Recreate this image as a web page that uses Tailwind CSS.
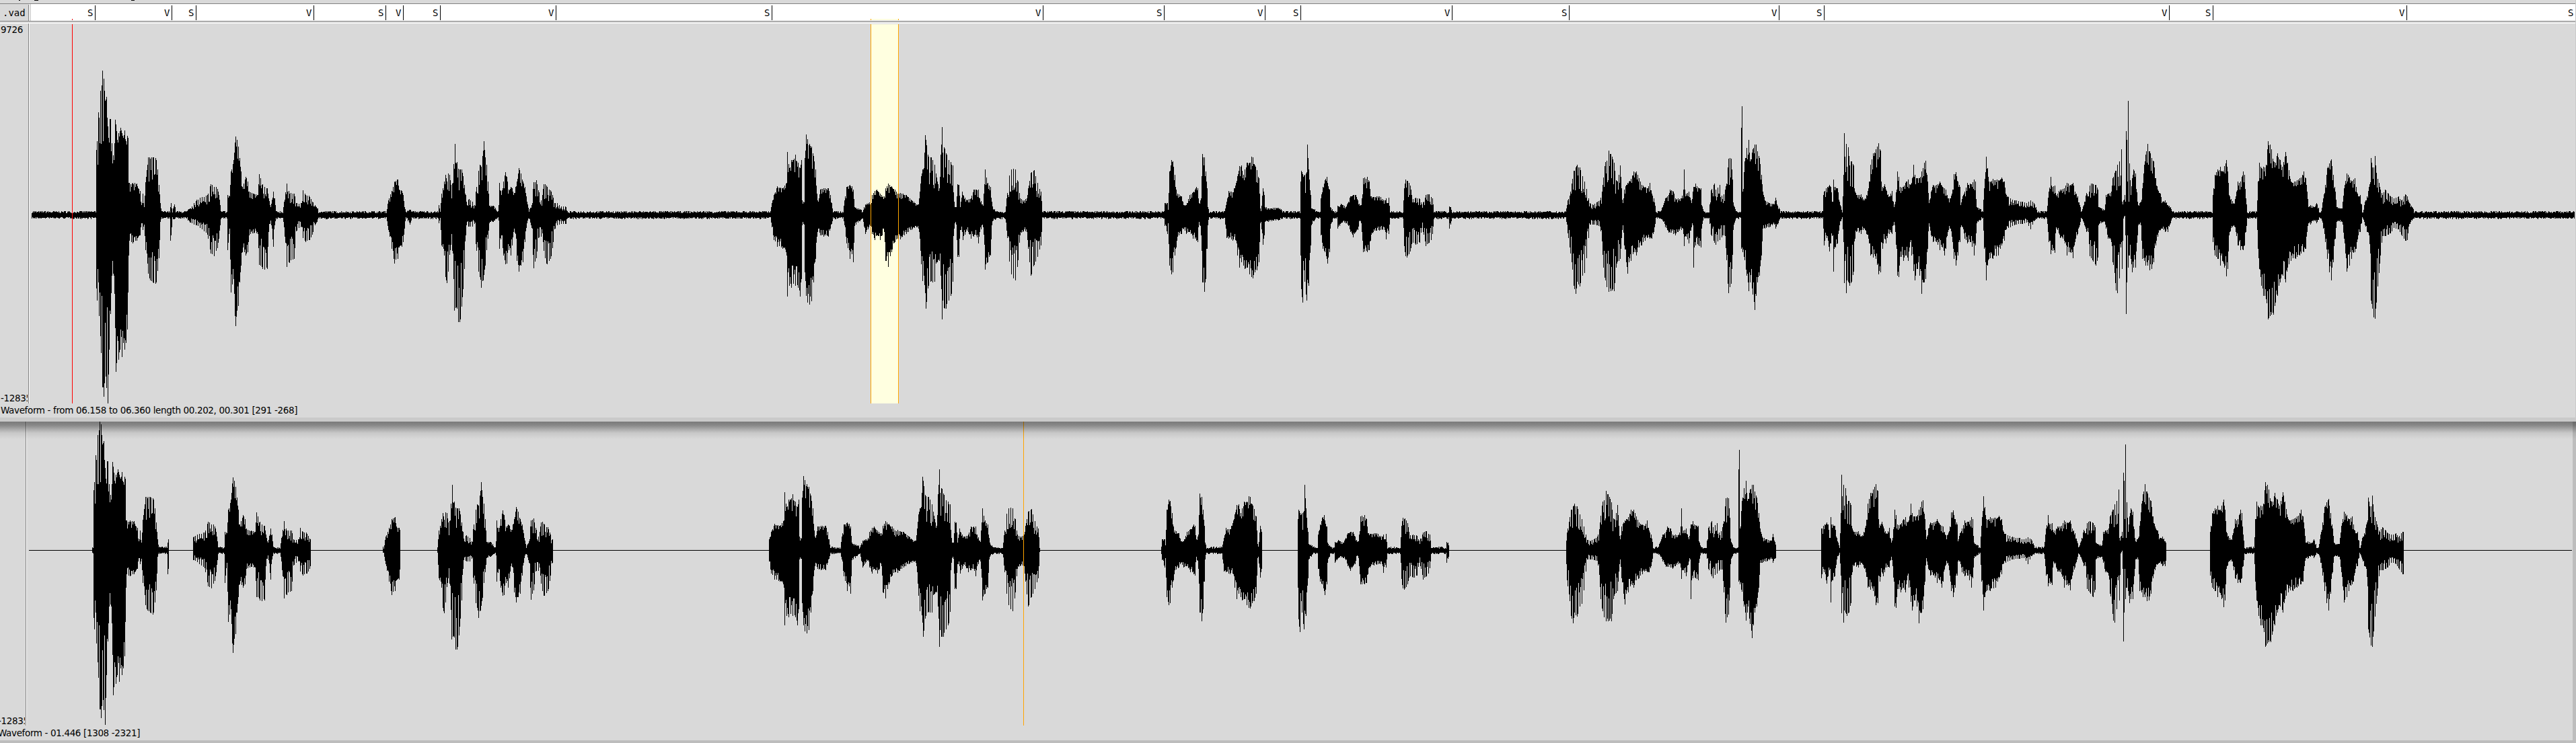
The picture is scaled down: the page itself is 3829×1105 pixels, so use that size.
<!DOCTYPE html>
<html lang="en">
<head>
<meta charset="utf-8">
<title>Waveform</title>
<script src="https://cdn.jsdelivr.net/npm/@tailwindcss/browser@4"></script>
</head>
<body class="w-[3829px] h-[1105px] overflow-hidden bg-[#d9d9d9] text-black font-['DejaVu_Sans',sans-serif] text-[13.5px] tracking-[-0.36px]">
<main class="flex flex-col w-full h-full">
  <section class="flex flex-col h-[627px] border-b-[6px] border-r border-[#cacaca] shrink-0">
    <div class="h-[5px] shrink-0 overflow-hidden">
      <svg class="block" width="300" height="5" shape-rendering="crispEdges"><path d="M28 0h2v1h-2zM51 0h6v1h-6zM195 0h5v1h-5z"/></svg>
    </div>
    <div class="flex h-[27px] shrink-0 border-y border-[#828282] font-['DejaVu_Sans_Mono',monospace] text-[14px] tracking-normal">
      <div class="w-[43px] mt-px border-r border-[#828282] pl-[4px] leading-[24px]">.vad</div>
      <div class="w-px bg-white"></div>
      <div class="w-[2px] bg-[#d9d9d9]"></div>
      <div id="marks" class="relative grow bg-white overflow-hidden"></div>
    </div>
    <div class="h-[2px] shrink-0"></div>
    <div class="h-px bg-white shrink-0"></div>
    <div class="flex h-[565px] shrink-0">
      <div class="flex flex-col justify-between w-[43px] border-r border-[#828282] pl-px pt-[1px] overflow-hidden leading-[16px]">
        <span>9726</span><span class="w-10 overflow-hidden">-12835</span>
      </div>
      <div class="w-px bg-white"></div>
      <svg id="top" class="block" width="3784" height="565" viewBox="44 35 3784 565" shape-rendering="crispEdges">
        <rect x="1294" y="36" width="42" height="564" fill="#ffffe0"/>
        <path class="wave" stroke="#000" fill="none"/>
        <path d="M107.500 36V600" stroke="#f00"/>
        <path d="M1294.500 36V600M1335.500 36V600" stroke="#ffa500"/>
      </svg>
    </div>
    <div class="leading-[21px] pl-px whitespace-pre">Waveform - from 06.158 to 06.360 length 00.202, 00.301 [291 -268]</div>
  </section>
  <section class="relative flex flex-col grow border-r-[5px] border-b-[5px] border-[#bdbdbd]">
    <div class="flex h-[452px] shrink-0">
      <div class="flex flex-col justify-end w-[39px] border-r border-[#828282] overflow-hidden leading-[14px]">
        <span class="-ml-[3px] w-[40px] overflow-hidden">-12835</span>
      </div>
      <div class="w-px bg-white"></div>
      <svg id="bottom" class="block" width="3784" height="452" viewBox="40 627 3784 452" shape-rendering="crispEdges">
        <path d="M43 818.500H3823" stroke="#000"/>
        <path class="wave" stroke="#000" fill="none"/>
        <path d="M1521.500 627V1079" stroke="#ffa500"/>
      </svg>
    </div>
    <div class="-ml-[3px] leading-[22px] whitespace-pre">Waveform - 01.446 [1308 -2321]</div>
    <div class="absolute top-0 left-0 -right-[5px] h-[26px] bg-linear-[to_bottom,rgba(0,0,0,.44)_0%,rgba(0,0,0,.37)_22%,rgba(0,0,0,.22)_43%,rgba(0,0,0,.08)_65%,transparent_100%]"></div>
  </section>
</main>
<script>
// Voice activity marks: label and x position of each boundary
const marks = [['S',141],['V',255],['S',291],['V',466],['S',573],['V',599],['S',654],['V',826],['S',1147],['V',1550],['S',1730],['V',1880],['S',1933],['V',2158],['S',2332],['V',2644],['S',2711],['V',3224],['S',3289],['V',3577],['S',3828]];
document.getElementById('marks').innerHTML = marks.map(([t, x]) =>
  `<div class="absolute top-[2px] h-[22px] w-[12px] border-r border-black leading-[23px]" style="left:${x - 57}px">${t}</div>`).join('')
  + '<div class="absolute top-[22px] h-[2px] w-px bg-red-600 left-[61px]"></div><div class="absolute top-[22px] h-[2px] w-[42px] left-[1248px] bg-[#ffffe0] border-x border-[#ffa500]"></div>';

// Envelope of the signal: x, peak above zero, peak below zero
const env = `47,5,5;142,5,5;142.5,50,50;143,97,109;144,110,127;145,75,80;146,153,100;147,145,150;148,107,115;149,185,180;150,106,205;151,193,120;152,215,256;153,110,256;154,203,270;155,185,250;156,170,160;157,172,240;158,176,257;159,145,137;160,132,281;161,115,237;162,108,200;163,143,142;164,143,147;166,107,90;169,82,90;171,142,168;172,135,233;173,125,220;174,112,180;176,122,215;178,125,200;179,130,170;181,122,211;183,115,190;185,126,200;187,110,190;188,105,148;189,118,170;190,115,115;190.500,48,71;192,48,38;197,48,42;203,47,38;208,36,30;210,15,12;212,32,22;214,12,14;215.500,44,50;218,68,60;220,88,92;223,86,98;227,88,103;232,84,103;234,70,88;236,45,65;238,18,10;240,6,6;252,6,6;253,12,38;254,18,30;256,8,8;259,16,6;261,7,6;275,6,6;283,10,12;292,23,16;300,27,22;308,30,30;313,46,60;318,44,64;323,40,50;325,30,35;328,8,6;337,6,6;338,30,52;341,28,20;343,65,115;347,82,95;349,108,150;350,117,165;352,112,142;354,102,135;356,85,100;358,65,75;360,42,55;365,57,60;368,50,55;370,35,30;377,32,27;383,30,28;385,62,76;389,47,80;393,42,85;397,40,82;399,25,25;402,12,8;406,35,47;408,25,15;410,6,6;420,7,6;422,20,18;426,48,78;430,33,72;437,32,66;440,18,25;444,17,20;448,18,18;450,37,35;454,30,41;460,28,38;464,20,30;468,15,16;474,7,6;500,7,5;560,4,5;573,5,5;574,7,7;577,22,22;582,36,50;586,50,72;591,53,65;593,38,48;597,36,47;599,30,40;601,12,20;603,6,5;609,8,14;612,6,8;640,6,8;651,5,6;652,15,12;654,6,6;656,32,45;660,50,60;662,60,92;664,50,104;666,62,85;668,60,60;670,45,45;673,50,58;674,78,98;675,70,150;676,107,72;677,80,145;679,80,142;681,72,164;683,68,163;686,68,140;688,58,115;690,45,80;692,30,30;693,20,16;697,24,18;702,20,18;706,14,12;707,35,45;711,68,85;713,76,95;715,74,109;718,98,100;719,110,92;721,90,78;723,75,55;725,50,35;727,14,12;733,14,10;740,6,5;741,15,8;742,48,50;745,30,30;748,50,60;751,64,73;753,57,72;756,38,52;759,42,60;761,40,45;763,30,25;766,42,28;768,50,68;771,70,84;774,62,75;777,50,70;780,42,40;783,20,12;786,7,5;790,15,20;793,50,80;797,52,65;800,38,35;804,22,34;806,30,28;808,47,55;812,44,75;818,37,69;821,30,50;824,18,22;828,18,16;834,13,14;841,12,14;843,5,5;1143,5,5;1145,6,6;1147,18,18;1150,30,37;1155,43,47;1163,40,50;1168,47,55;1169,48,60;1170,94,121;1173,70,105;1176,82,108;1179,82,102;1182,90,105;1186,78,108;1189,70,121;1191,82,95;1192,22,15;1195,19,14;1196,85,85;1198,120,120;1200,113,130;1203,106,133;1206,102,128;1209,88,100;1212,68,65;1214,32,32;1216,20,20;1219,38,30;1224,40,32;1231,40,32;1234,30,20;1238,7,7;1253,5,5;1255,22,15;1258,42,42;1263,45,65;1266,43,58;1268,38,70;1270,12,16;1282,7,7;1286,16,28;1294,20,16;1296,30,28;1300,36,37;1303,38,30;1308,32,37;1314,28,25;1316,40,68;1320,47,77;1325,43,55;1330,38,40;1334,32,35;1338,33,36;1347,30,28;1355,22,22;1363,15,18;1365,16,20;1367,35,35;1369,58,73;1371,68,98;1373,70,90;1375,124,120;1376,112,142;1379,90,110;1384,88,103;1389,75,100;1391,62,72;1393,50,70;1396,40,68;1398,90,90;1399,105,110;1400,134,162;1401,95,130;1403,103,143;1406,92,142;1410,82,130;1414,78,118;1416,76,100;1418,20,20;1419,12,12;1421,12,14;1423,46,62;1425,45,62;1427,12,22;1430,35,25;1431,30,37;1437,22,23;1443,25,35;1447,38,32;1451,38,30;1454,38,42;1456,25,25;1461,14,18;1464,68,81;1468,48,70;1472,42,60;1474,20,15;1476,9,8;1494,6,6;1496,25,25;1500,60,70;1503,70,92;1506,72,98;1509,68,100;1513,50,70;1516,25,30;1520,22,25;1526,25,25;1528,40,50;1532,63,93;1537,68,76;1542,48,65;1547,35,45;1549,7,6;1730,6,6;1731,18,16;1735,18,28;1736,8,12;1738,65,75;1741,82,88;1743,80,85;1746,60,60;1748,38,48;1750,32,32;1756,28,28;1759,15,20;1763,15,28;1768,30,25;1773,34,35;1778,42,38;1780,40,40;1782,18,10;1785,25,30;1787,91,100;1790,86,114;1792,65,95;1794,40,50;1795,12,15;1797,6,6;1820,5,5;1823,20,34;1826,36,35;1832,34,38;1837,48,38;1839,58,60;1842,73,78;1845,74,70;1848,60,75;1850,68,80;1853,78,78;1857,78,88;1860,87,92;1862,86,94;1865,74,85;1868,67,82;1871,55,70;1873,10,12;1874,6,10;1877,40,44;1879,30,30;1880,12,10;1885,10,10;1900,11,8;1910,6,5;1932,5,5;1933,50,60;1934,66,115;1936,62,131;1937,58,70;1939,62,100;1942,64,131;1943,107,100;1945,70,110;1946,55,70;1948,30,45;1949,10,15;1955,8,8;1962,8,8;1963,25,30;1966,42,50;1969,52,55;1972,57,65;1973,48,72;1976,38,55;1977,12,20;1982,6,5;1987,5,4;1988,14,20;1991,12,16;1993,17,12;2000,12,12;2003,18,14;2007,28,25;2011,30,33;2015,30,25;2018,22,22;2021,14,8;2023,15,12;2024,25,25;2026,55,55;2032,57,55;2035,50,52;2037,28,38;2041,27,25;2050,28,23;2058,22,22;2060,25,36;2062,18,20;2064,26,28;2066,6,6;2085,5,5;2087,40,48;2089,54,64;2092,52,63;2096,45,55;2098,30,45;2100,25,42;2104,26,45;2110,24,42;2113,16,20;2116,20,30;2119,30,47;2123,32,43;2127,28,38;2129,26,30;2131,7,6;2153,5,5;2154,13,20;2156,12,14;2158,6,6;2327,6,6;2328,10,10;2330,22,28;2333,30,50;2336,48,73;2339,67,108;2342,72,119;2344,75,105;2348,73,107;2352,60,95;2355,50,88;2358,40,65;2361,25,35;2363,18,15;2368,15,15;2374,20,16;2378,22,18;2381,35,40;2383,58,80;2386,80,100;2388,85,112;2391,98,119;2393,94,115;2396,90,113;2399,78,115;2402,52,80;2404,50,70;2408,74,68;2410,40,35;2412,18,15;2414,38,45;2417,45,70;2419,48,87;2421,50,70;2424,54,68;2428,65,55;2432,65,60;2436,55,48;2440,45,45;2445,42,38;2449,40,33;2452,48,35;2455,32,35;2458,25,25;2461,8,8;2466,5,5;2471,12,8;2475,25,18;2480,30,26;2482,38,26;2487,35,28;2490,25,30;2494,25,25;2499,25,22;2502,38,28;2503,68,46;2504,38,32;2506,32,32;2510,35,42;2514,18,18;2516,35,15;2517,42,78;2518,42,48;2520,47,45;2524,41,45;2528,40,48;2529,15,20;2532,8,8;2540,5,6;2543,38,30;2548,48,42;2550,38,45;2556,45,38;2560,25,32;2564,38,32;2566,48,68;2569,85,122;2571,88,112;2573,85,103;2575,55,60;2577,14,14;2580,7,8;2587,4,5;2588,130,50;2589,162,48;2590,35,55;2593,80,67;2596,100,90;2598,90,100;2599,112,113;2601,80,100;2605,98,118;2608,105,141;2610,105,120;2612,95,100;2615,85,90;2618,60,60;2620,35,20;2623,22,20;2630,18,18;2637,16,14;2639,26,20;2642,14,14;2647,6,6;2709,6,6;2710,30,20;2711,35,45;2714,40,30;2719,45,54;2721,42,42;2724,20,30;2725,53,84;2726,42,50;2728,42,48;2731,40,42;2734,20,15;2738,6,5;2740,60,40;2741,126,106;2742,90,70;2744,106,119;2745,75,100;2747,103,100;2749,75,108;2752,83,100;2755,75,85;2757,35,35;2759,30,25;2766,31,28;2771,22,20;2774,30,28;2777,40,35;2780,75,60;2784,92,63;2788,98,65;2792,107,88;2795,96,85;2796,50,40;2798,42,50;2801,46,35;2803,38,42;2808,28,28;2812,36,28;2815,12,10;2817,20,25;2820,65,90;2822,57,92;2824,42,62;2829,42,68;2833,50,60;2836,53,68;2839,45,40;2841,48,60;2844,75,83;2846,60,97;2849,55,80;2853,55,90;2856,65,117;2860,78,100;2862,81,95;2865,50,50;2867,18,12;2870,35,30;2873,45,40;2878,45,40;2883,50,52;2887,42,48;2890,40,60;2892,38,50;2895,25,25;2899,25,20;2902,38,40;2904,61,65;2907,64,75;2910,50,60;2913,42,40;2914,15,18;2917,28,18;2920,35,35;2924,48,42;2929,46,40;2934,53,60;2936,50,45;2938,12,12;2947,7,6;2949,40,50;2952,87,97;2954,70,75;2956,50,65;2962,54,65;2970,52,60;2975,56,45;2979,50,38;2981,32,22;2985,27,20;2995,22,15;3005,20,14;3012,18,12;3018,22,22;3023,18,10;3028,8,6;3042,6,6;3045,35,40;3048,57,58;3049,44,52;3054,44,56;3056,30,18;3062,38,34;3068,40,38;3072,48,60;3077,45,55;3081,48,64;3084,35,40;3088,28,28;3091,15,15;3094,5,5;3098,20,15;3101,33,25;3104,28,25;3106,45,65;3110,48,70;3115,46,76;3118,38,65;3119,12,15;3128,8,10;3130,30,20;3133,32,35;3138,35,40;3140,55,70;3143,65,90;3145,68,115;3147,75,117;3150,80,95;3152,60,50;3153,98,40;3154,20,80;3156,22,5;3158,30,1;3159,20,30;3160,125,147;3161,112,100;3162,50,30;3163,170,78;3164,20,60;3165,77,60;3167,30,65;3169,55,85;3171,68,78;3174,62,78;3177,20,30;3178,15,15;3182,20,15;3184,40,65;3187,75,68;3189,90,75;3192,106,75;3195,95,82;3198,85,80;3201,80,70;3204,55,45;3207,38,32;3211,32,22;3214,20,20;3218,22,25;3222,15,25;3226,12,12;3229,6,6;3288,6,6;3289,30,40;3292,60,60;3296,68,65;3300,72,75;3303,65,68;3309,82,91;3311,65,80;3313,30,30;3320,18,15;3323,28,25;3326,50,45;3330,50,52;3334,65,52;3336,60,45;3338,25,25;3340,8,8;3354,7,7;3356,50,50;3358,78,80;3361,70,105;3364,72,120;3368,75,125;3371,110,155;3374,105,150;3376,98,148;3379,80,148;3382,78,130;3385,92,120;3389,82,100;3392,72,88;3397,94,100;3400,78,78;3405,50,68;3412,50,65;3418,55,60;3424,65,55;3427,55,50;3429,35,25;3431,12,12;3434,15,14;3440,12,8;3443,18,12;3447,8,7;3450,6,5;3453,25,20;3456,45,40;3459,70,65;3462,77,85;3465,83,97;3468,60,70;3471,35,35;3473,12,10;3479,10,10;3481,10,10;3484,40,35;3488,62,84;3492,57,75;3495,50,65;3500,55,55;3502,42,50;3505,28,30;3508,30,25;3511,8,6;3512,5,5;3515,20,15;3518,28,25;3521,42,30;3523,50,60;3524,85,130;3526,74,140;3528,72,154;3530,88,155;3532,65,135;3534,55,110;3536,48,88;3538,38,62;3541,30,32;3545,38,32;3550,33,30;3553,28,28;3558,25,20;3565,28,22;3569,22,30;3575,31,39;3578,28,38;3580,20,18;3585,12,8;3590,6,6;3827,5,5`
  .split(';').map(p => p.split(',').map(Number));

let seed = 7;
const rnd = () => (seed = (seed * 16807) % 2147483647) / 2147483647;
// Share of the peak that a column reaches; voiced stretches alternate long and short columns
const reach = (x, pitch) => x % pitch < 1 ? .95 + rnd() * .05 : .7 + rnd() * .27;
// Stretches where pitch pulses leave wide gaps between the columns
const sparse = [[218,236],[283,323],[385,397],[425,468],[663,689],[693,724],[790,842],[1375,1390],[1400,1417],[1496,1515],[1530,1546],[1934,1946],[2087,2129],[2330,2362],[2363,2410],[2541,2576],[2741,2756],[2985,3023],[3106,3118],[3141,3152],[3523,3580]];

const cols = [];
let k = 0;
for (let x = 47; x < 3827; x++) {
  while (k < env.length - 2 && env[k + 1][0] <= x) k++;
  const [x0, u0, d0] = env[k], [x1, u1, d1] = env[k + 1];
  const t = (x - x0) / (x1 - x0);
  let u = u0 + (u1 - u0) * t, d = d0 + (d1 - d0) * t;
  const open = sparse.some(([a, b]) => x >= a && x <= b);
  if (u < 8.5 && d < 8.5) { u = 2.7 + rnd() * 3.2; d = 3.2 + rnd() * 3; }
  else if (open) {
    const pulse = x % 3 === 0 || x - x0 < 1;
    u *= pulse ? .95 + rnd() * .05 : .5 + rnd() * .28;
    d *= pulse ? .95 + rnd() * .05 : .44 + rnd() * .25;
  } else if (x - x0 >= 1) {
    u *= reach(x, 2);
    d *= reach(x, 3);
  }
  cols.push([x, u, d]);
}
const draw = (list, zero, gain, shift) => list.map(([x, u, d]) =>
  `M${x + shift + .5} ${Math.round(zero - u * gain)}V${Math.round(zero + d * gain)}`).join('');

document.querySelector('#top .wave').setAttribute('d', draw(cols, 319.5, 1, 0));

// The second track keeps only what lies between an S and the next V
const spans = [];
for (let i = 0; i + 1 < marks.length; i += 2) spans.push([marks[i][1], marks[i + 1][1]]);
const voiced = cols.filter(([x]) => spans.some(([a, b]) => x >= a && x < b));
document.querySelector('#bottom .wave').setAttribute('d', draw(voiced, 818.5, .925, -4));
</script>
</body>
</html>
